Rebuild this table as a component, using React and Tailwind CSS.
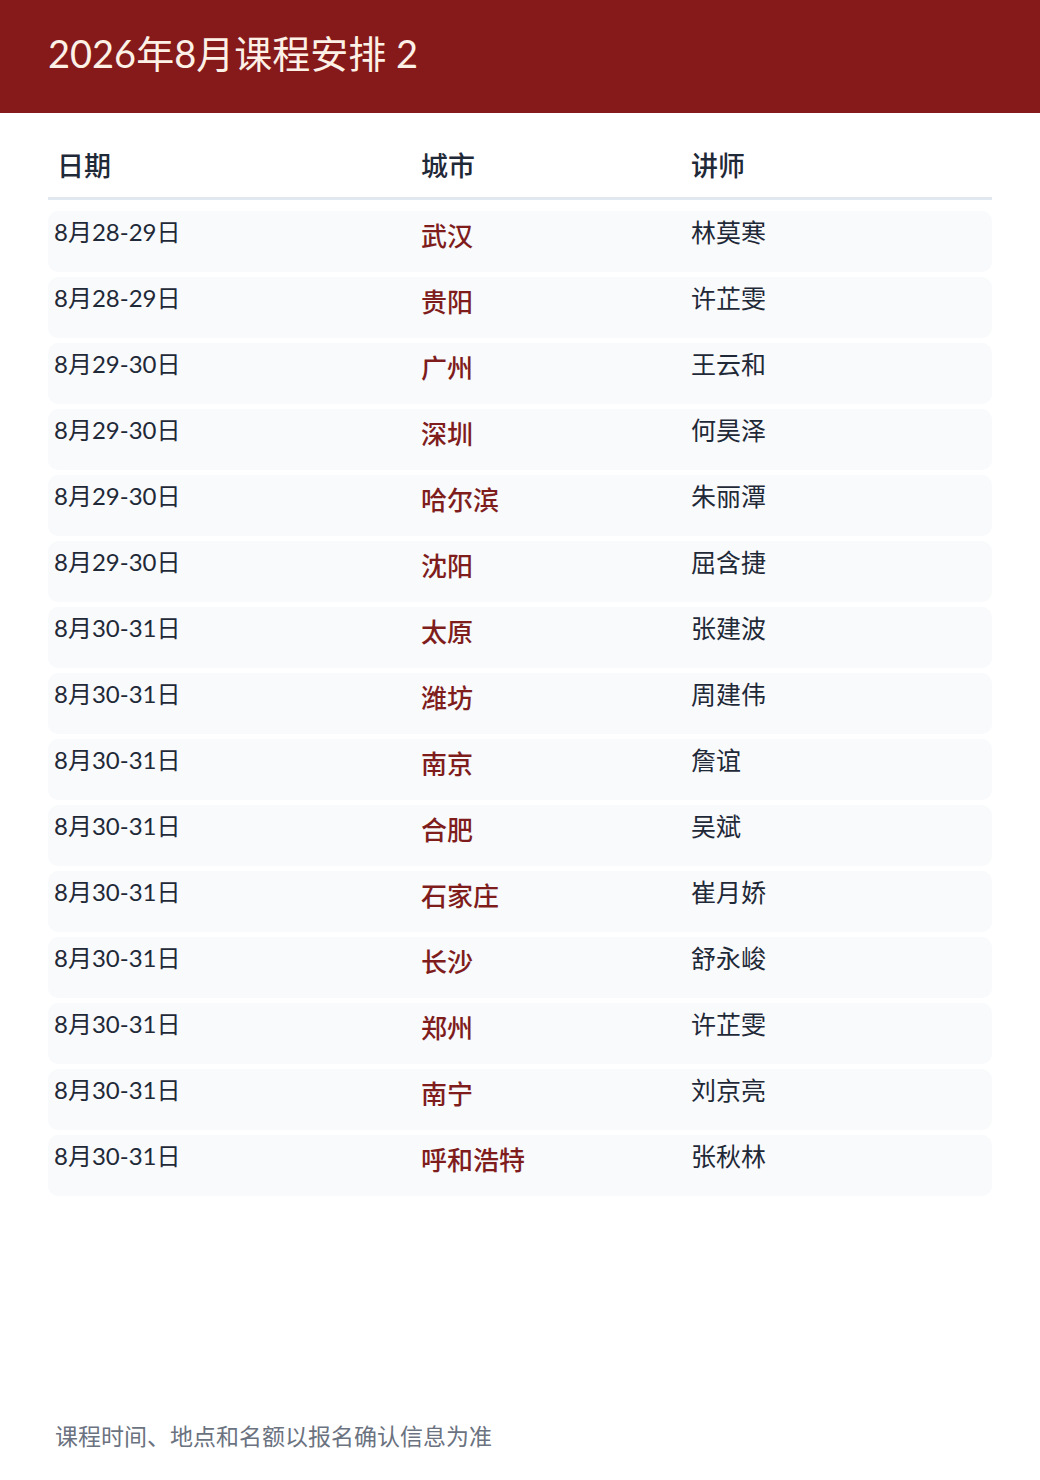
import React from "react";

const rows = [
  ["8月28-29日", "武汉", "林莫寒"],
  ["8月28-29日", "贵阳", "许芷雯"],
  ["8月29-30日", "广州", "王云和"],
  ["8月29-30日", "深圳", "何昊泽"],
  ["8月29-30日", "哈尔滨", "朱丽潭"],
  ["8月29-30日", "沈阳", "屈含捷"],
  ["8月30-31日", "太原", "张建波"],
  ["8月30-31日", "潍坊", "周建伟"],
  ["8月30-31日", "南京", "詹谊"],
  ["8月30-31日", "合肥", "吴斌"],
  ["8月30-31日", "石家庄", "崔月娇"],
  ["8月30-31日", "长沙", "舒永峻"],
  ["8月30-31日", "郑州", "许芷雯"],
  ["8月30-31日", "南宁", "刘京亮"],
  ["8月30-31日", "呼和浩特", "张秋林"],
];

export default function App() {
  return (
    <div className="w-[1040px] h-[1480px] bg-white flex flex-col font-['Lato','Noto_Sans_CJK_SC',sans-serif]">
      <div className="h-[113px] bg-[#861a1a] flex items-center px-[48px]">
        <h1 className="text-[38px] leading-none text-[#fdf1e7] font-normal pb-[8px]">2026年8月课程安排 2</h1>
      </div>
      <div className="px-[48px] pt-[35px] flex-1">
        <div className="grid grid-cols-[373px_270px_1fr] border-b-[3px] border-[#e2e8f0] pb-[13px] text-[27px] leading-[36px] font-medium text-[#1f2937]">
          <div className="pl-[9px]">日期</div>
          <div>城市</div>
          <div>讲师</div>
        </div>
        <div className="flex flex-col gap-[5px] mt-[11px]">
          {rows.map((r, i) => (
            <div key={i} className="grid grid-cols-[373px_270px_1fr] h-[61px] rounded-[10px] bg-[#f8fafc] items-start pt-[3px]">
              <div className="pl-[6px] text-[24px] leading-[36px] text-[#1f2937]">{r[0]}</div>
              <div className="text-[26px] leading-[36px] pt-[4px] font-medium text-[#7f1d1d]">{r[1]}</div>
              <div className="text-[25px] leading-[36px] text-[#1f2937]">{r[2]}</div>
            </div>
          ))}
        </div>
      </div>
      <div className="px-[55px] pb-[28px] text-[23px] leading-[32px] text-[#6b7280]">课程时间、地点和名额以报名确认信息为准</div>
    </div>
  );
}
